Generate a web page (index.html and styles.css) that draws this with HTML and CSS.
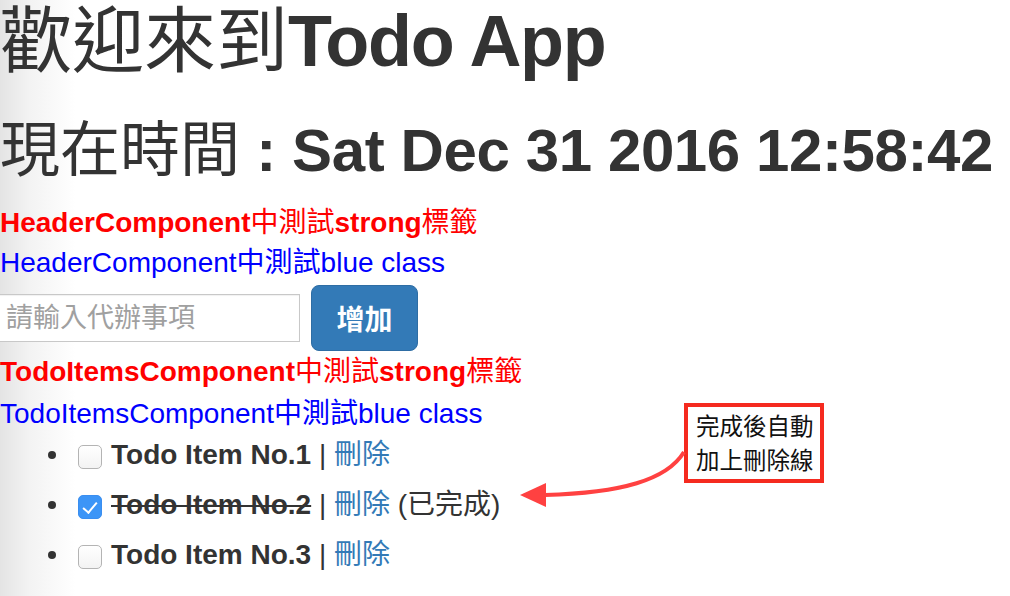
FILE: index.html
```html
<!DOCTYPE html>
<html lang="zh-Hant">
<head>
<meta charset="utf-8">
<title>Todo App</title>
<link rel="stylesheet" href="styles.css">
</head>
<body>
<div class="app">
  <h1 class="title"><span class="cjk">歡迎來到</span>Todo App</h1>
  <h2 class="clock"><span class="cjk">現在時間</span> : Sat Dec 31 2016 12:58:42 GMT+0800 (CST)</h2>

  <div class="header-test">
    <strong class="strong-line">HeaderComponent<span class="cjk">中測試</span>strong<span class="cjk">標籤</span></strong>
    <div class="blue">HeaderComponent中測試blue class</div>
  </div>

  <form class="add-form">
    <input class="todo-input" type="text" placeholder="請輸入代辦事項">
    <button class="btn-add" type="button">增加</button>
  </form>

  <div class="items-test">
    <strong class="strong-line">TodoItemsComponent<span class="cjk">中測試</span>strong<span class="cjk">標籤</span></strong>
    <div class="blue blue-2">TodoItemsComponent中測試blue class</div>
  </div>

  <ul class="todo-list">
    <li class="todo-item"><input type="checkbox" class="check"><span class="todo-text">Todo Item No.1</span> | <a class="del" href="#">刪除</a></li>
    <li class="todo-item done"><input type="checkbox" class="check" checked><span class="todo-text">Todo Item No.2</span> | <a class="del" href="#">刪除</a> (已完成)</li>
    <li class="todo-item"><input type="checkbox" class="check"><span class="todo-text">Todo Item No.3</span> | <a class="del" href="#">刪除</a></li>
  </ul>

  <div class="note">完成後自動<br>加上刪除線</div>
  <svg class="arrow" width="175" height="75" viewBox="0 0 175 75">
    <path d="M169 12 C152 40 106 53 30 55" fill="none" stroke="#ff4141" stroke-width="4"/>
    <polygon points="5,55 31,43 31,67" fill="#ff4141"/>
  </svg>
</div>
</body>
</html>
```
FILE: styles.css
```css
html {
  overflow: hidden;
  min-height: 100%;
  background: #fff linear-gradient(to right, #e4e4e4, #f3f3f3 30px, #fff 75px) 0 0 / 80px 100% repeat-y;
}

body {
  margin: 0;
  font-family: "Liberation Sans", "Noto Sans CJK TC", sans-serif;
  font-size: 28px;
  line-height: 40px;
  color: #333;
}

.app {
  position: relative;
}

.cjk {
  font-weight: 400;
}

.title {
  margin: 0;
  font-size: 72px;
  line-height: 82px;
  font-weight: 700;
  letter-spacing: -1.3px;
  white-space: nowrap;
}

.title .cjk {
  letter-spacing: 0;
}

.clock {
  margin: 39px 0 0;
  font-size: 60px;
  line-height: 60px;
  font-weight: 700;
  letter-spacing: -0.4px;
  white-space: nowrap;
}

.clock .cjk {
  letter-spacing: 0;
}

.header-test {
  margin-top: 22px;
}

.strong-line {
  display: block;
  color: #ff0000;
  font-weight: 700;
}

.blue {
  color: #0000ff;
}

.add-form {
  display: flex;
  align-items: center;
  gap: 11px;
  height: 66px;
  margin: 2px 0 0;
}

.todo-input {
  box-sizing: border-box;
  width: 302px;
  height: 48px;
  margin: 0 0 0 -2px;
  padding: 0 7px;
  border: 1px solid #c8c8c8;
  border-radius: 0;
  background: #fff;
  font-family: "Liberation Sans", "Noto Sans CJK TC", sans-serif;
  font-size: 27px;
  color: #555;
  box-shadow: inset 0 1px 1px rgba(0, 0, 0, 0.06);
}

.todo-input::placeholder {
  color: #a0a0a0;
}

.btn-add {
  box-sizing: border-box;
  width: 107px;
  height: 66px;
  padding: 0;
  border: 1px solid #2e6da4;
  border-radius: 8px;
  background: #337ab7;
  color: #fff;
  font-family: "Liberation Sans", "Noto Sans CJK TC", sans-serif;
  font-size: 28px;
  font-weight: 700;
}

.items-test {
  margin-top: 1px;
}

.blue-2 {
  margin-top: 2px;
}

.todo-list {
  margin: 1px 0 0;
  padding-left: 78px;
  list-style: none;
}

.todo-item {
  margin-bottom: 10px;
}

.todo-item::before {
  content: "";
  display: inline-block;
  width: 8px;
  height: 8px;
  margin: 0 22px 0 -30px;
  border-radius: 50%;
  background: #333;
  vertical-align: 5px;
}

.check {
  position: relative;
  -webkit-appearance: none;
  appearance: none;
  box-sizing: border-box;
  width: 24px;
  height: 24px;
  margin: 0 9px 0 0;
  border: 1px solid #b4b4b4;
  border-radius: 5px;
  background: linear-gradient(#ffffff, #f3f3f3);
  vertical-align: -5px;
}

.check:checked {
  border-color: #3a8ef0;
  background: #3c95f7;
}

.check:checked::after {
  content: "";
  position: absolute;
  left: 7px;
  top: 3px;
  width: 6px;
  height: 12px;
  border: solid #fff;
  border-width: 0 2.5px 2.5px 0;
  transform: rotate(40deg);
}

.todo-text {
  font-weight: 700;
}

.done .todo-text {
  text-decoration: line-through;
  text-decoration-thickness: 2px;
}

.del {
  color: #337ab7;
  text-decoration: none;
}

.note {
  position: absolute;
  left: 684px;
  top: 403px;
  box-sizing: border-box;
  width: 140px;
  height: 80px;
  padding: 1px 0 0 8px;
  border: 4px solid #f52a1f;
  background: #fff;
  font-family: "Noto Sans CJK TC", sans-serif;
  font-size: 23.5px;
  line-height: 34px;
  color: #111;
}

.arrow {
  position: absolute;
  left: 515px;
  top: 440px;
}
```
